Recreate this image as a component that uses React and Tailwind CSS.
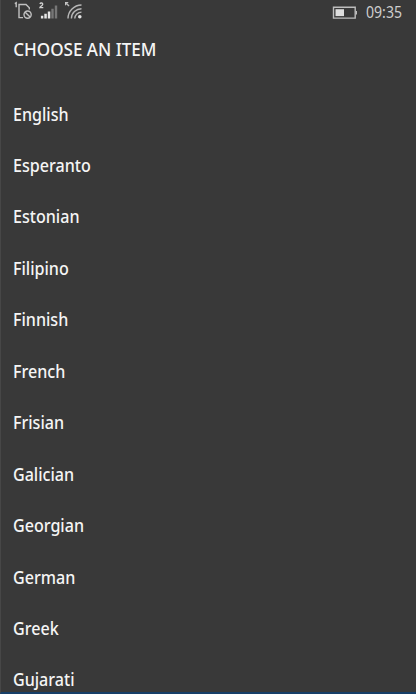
const languages = [
  'English', 'Esperanto', 'Estonian', 'Filipino', 'Finnish', 'French',
  'Frisian', 'Galician', 'Georgian', 'German', 'Greek', 'Gujarati',
];

function SimIcon() {
  return (
    <svg width="20" height="20" viewBox="0 0 20 20" fill="none" stroke="#c0c0c0" strokeWidth="1.4">
      <path d="M.8 3.6 2.2 2.7V7.3" />
      <path d="M9 17.6H5V4.5H12L15.3 7.8V9.6" />
      <circle cx="13.6" cy="14.6" r="3.6" />
      <path d="m11.2 12.2 4.9 4.9" />
    </svg>
  );
}

function SignalIcon() {
  return (
    <svg width="20" height="20" viewBox="0 0 20 20">
      <path d="M.9 4C1.5 2.4 4 2.8 3.7 4.4 3.5 5.5 1.2 6.4.9 7.6H4.3" fill="none" stroke="#d0d0d0" strokeWidth="1.3" />
      <path d="M1.9 15.8h2.4V18.5H1.9zM5.3 13.8h2.5v4.7H5.3zM8.8 11.5h2.5v7H8.8z" fill="#e6e6e6" />
      <path d="M12.3 8.7h2.4v9.8h-2.4zM15.8 5.5h2.4v13h-2.4z" fill="#777777" />
    </svg>
  );
}

function WifiIcon() {
  return (
    <svg width="20" height="20" viewBox="0 0 20 20" fill="none" stroke="#b8b8b8" strokeWidth="1.4">
      <path d="M1 2h3.7L1 5.7z" fill="#c8c8c8" stroke="none" />
      <path d="M2 3 5 6" />
      <path d="M4 18.5C4.1 11 10 5.1 17.5 5M7.4 18.5C7.5 13 12 8.8 17.5 8.7M10.8 18.5c0-3.3 3.2-6.3 6.7-6.4" />
      <circle cx="15.8" cy="16.8" r="1.8" fill="#e4e4e4" stroke="none" />
    </svg>
  );
}

function BatteryIcon() {
  return (
    <svg className="mt-1.5" width="26" height="14" viewBox="0 0 26 14">
      <path d="M1.5 1.3h21.7v10.8H1.5z" fill="none" stroke="#bdbdbd" strokeWidth="1.4" />
      <path d="M3.5 3.2H12v6.9H3.5z" fill="#dedede" />
      <path d="M23.7 5h1.3v3.6h-1.3z" fill="#bdbdbd" />
    </svg>
  );
}

export default function App() {
  return (
    <div className="flex h-[694px] w-[416px] flex-col overflow-hidden border-b-2 border-l border-b-[#173f68] border-l-[#474747] bg-[#393939] font-['Noto_Sans','Open_Sans',sans-serif] text-[#f5f5f5]">
      <header className="flex h-6 shrink-0 items-start justify-between pr-[14px] pl-[13px]">
        <div className="flex gap-[5px]">
          <SimIcon />
          <SignalIcon />
          <WifiIcon />
        </div>
        <div className="flex items-start">
          <BatteryIcon />
          <time className="ml-2 w-9 origin-left scale-x-[.88] text-base leading-[25px] whitespace-nowrap text-[#cecece]">09:35</time>
        </div>
      </header>
      <h1 className="mt-[11px] h-7 shrink-0 origin-left scale-x-[.975] pl-[12.5px] text-[17.5px] leading-7 font-medium whitespace-nowrap">CHOOSE AN ITEM</h1>
      <ul className="mt-[25.6px] shrink-0">
        {languages.map((language) => (
          <li key={language} className="h-[51.45px] origin-left scale-x-[.92] pl-[13px] text-[17.5px] leading-[51.45px] font-medium">
            {language}
          </li>
        ))}
      </ul>
    </div>
  );
}
